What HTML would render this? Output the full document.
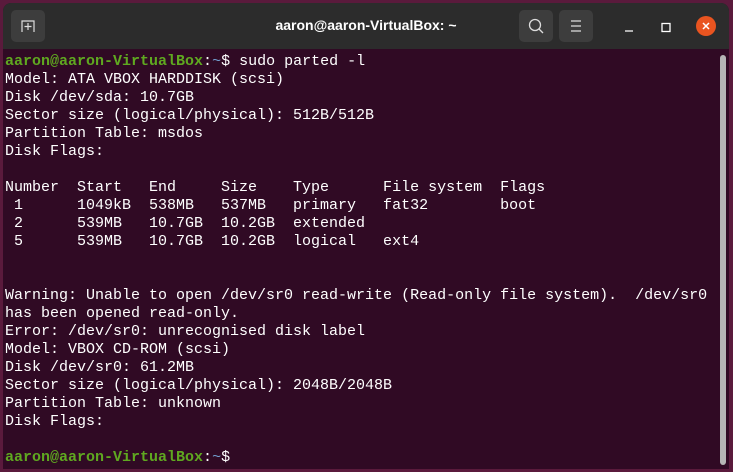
<!DOCTYPE html><html><head><style>
body{margin:0;width:733px;height:472px;background:#5a1a3c;overflow:hidden;position:relative}
.win{position:absolute;left:3px;top:3px;width:726px;height:466px;background:#300a24;border-radius:8px 8px 0 0;overflow:hidden}
.tb{position:absolute;left:0;top:0;width:726px;height:46px;background:#2c2c2c}
.btn{position:absolute;top:7px;width:34px;height:32px;background:#3d3d3d;border-radius:5px}
.title{position:absolute;left:0;width:726px;top:14px;text-align:center;color:#fff;font:bold 14px "Liberation Sans",sans-serif}
pre{position:absolute;left:2px;top:50px;margin:0;font:15px/18px "Liberation Mono",monospace;color:#fff}
.g{color:#5fa820;font-weight:bold}.b{color:#729fcf}
.sb{position:absolute;left:717px;top:52px;width:6px;height:410px;background:#b5b5b5;border-radius:3px}
</style></head><body><div class="win">
<div class="tb">
<div class="btn" style="left:8px"><svg width="34" height="32"><path d="M11 22V11h12v11M17 13v7M13.5 16.5h7" stroke="#ddd" stroke-width="1.2" fill="none"/></svg></div>
<div class="title">aaron@aaron-VirtualBox: ~</div>
<div class="btn" style="left:516px"><svg width="34" height="32"><circle cx="16" cy="15" r="5.5" stroke="#ddd" stroke-width="1.3" fill="none"/><path d="M20 19l4 4" stroke="#ddd" stroke-width="1.3"/></svg></div>
<div class="btn" style="left:556px"><svg width="34" height="32"><path d="M12 11h10M12 16h10M12 21h10" stroke="#ddd" stroke-width="1.2"/></svg></div>
<svg style="position:absolute;left:615px;top:18px" width="100" height="20"><path d="M7 10h8" stroke="#fff" stroke-width="1.2"/><rect x="44" y="2.5" width="8" height="8" stroke="#fff" stroke-width="1.3" fill="none"/></svg>
<div style="position:absolute;left:693px;top:13px;width:20px;height:20px;border-radius:50%;background:#e95420"><svg width="20" height="20"><path d="M7 7l6 6M13 7l-6 6" stroke="#fff" stroke-width="1.5"/></svg></div>
</div>
<pre><span class="g">aaron@aaron-VirtualBox</span>:<span class="b">~</span>$ sudo parted -l
Model: ATA VBOX HARDDISK (scsi)
Disk /dev/sda: 10.7GB
Sector size (logical/physical): 512B/512B
Partition Table: msdos
Disk Flags:

Number  Start   End     Size    Type      File system  Flags
 1      1049kB  538MB   537MB   primary   fat32        boot
 2      539MB   10.7GB  10.2GB  extended
 5      539MB   10.7GB  10.2GB  logical   ext4


Warning: Unable to open /dev/sr0 read-write (Read-only file system).  /dev/sr0
has been opened read-only.
Error: /dev/sr0: unrecognised disk label
Model: VBOX CD-ROM (scsi)
Disk /dev/sr0: 61.2MB
Sector size (logical/physical): 2048B/2048B
Partition Table: unknown
Disk Flags:

<span class="g">aaron@aaron-VirtualBox</span>:<span class="b">~</span>$</pre>
<div class="sb"></div>
</div></body></html>
